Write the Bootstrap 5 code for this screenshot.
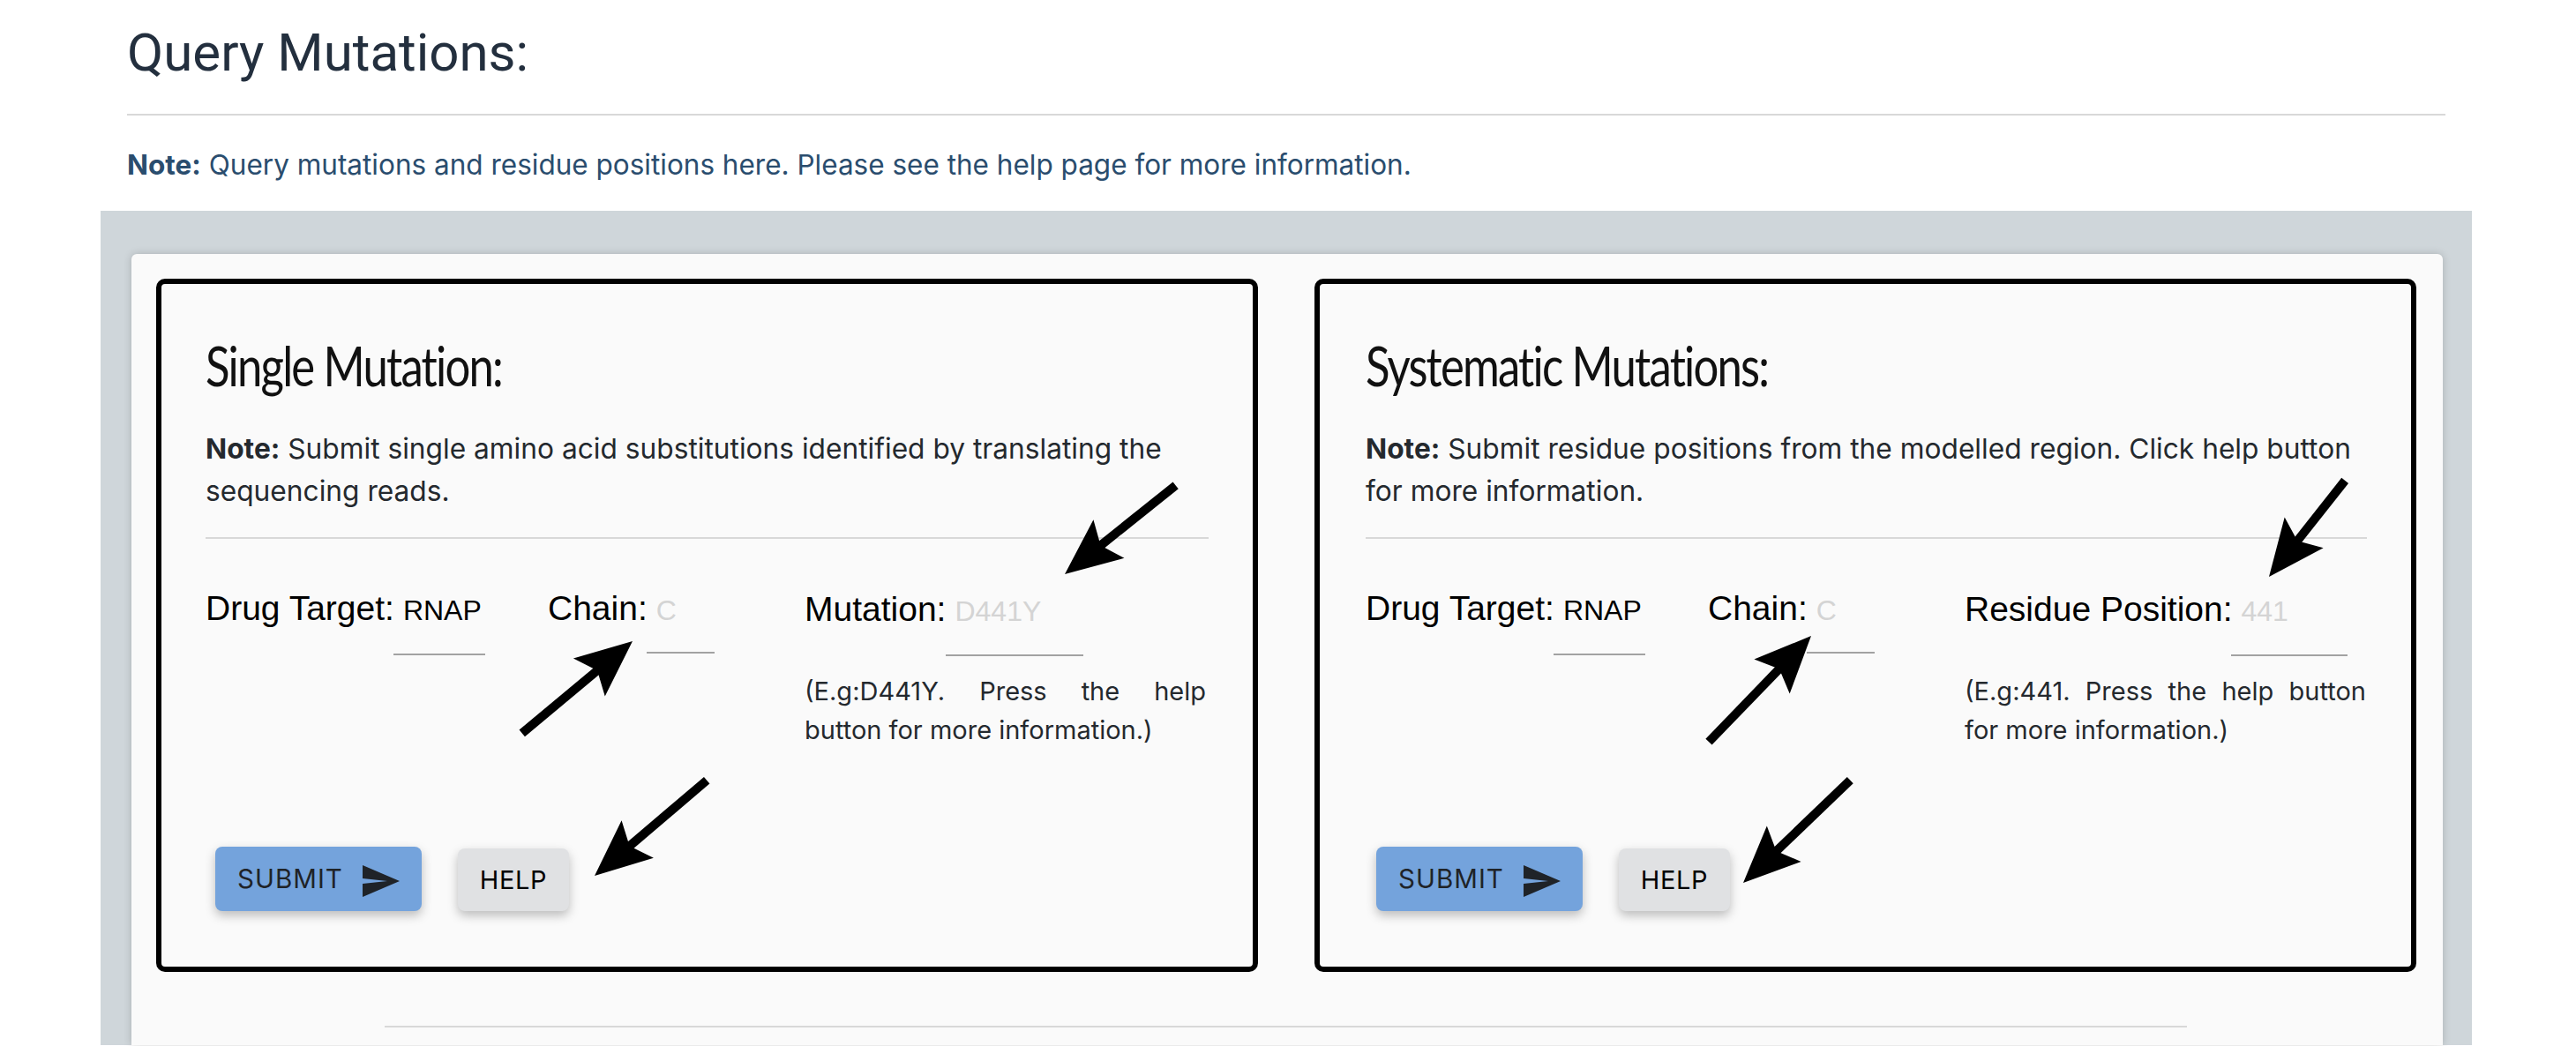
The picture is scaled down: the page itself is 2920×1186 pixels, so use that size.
<!DOCTYPE html>
<html lang="en">
<head>
    <meta charset="UTF-8">
    <meta name="viewport" content="width=device-width, initial-scale=1.0">
    <title>Query Mutations</title>
    <link href="https://cdn.jsdelivr.net/npm/bootstrap@5.3.0/dist/css/bootstrap.min.css" rel="stylesheet">
    <script src="https://cdn.jsdelivr.net/npm/bootstrap@5.3.0/dist/js/bootstrap.bundle.min.js"></script>
    <style>
        html, body { height: 100%; overflow: hidden; }
        body { font-family: Inter, sans-serif; background: #fff; }
        .page-wrap { height: 1186px; padding: 0 118px 0 114px; }
        .page-head { padding: 0 30px 0 30px; }
        .page-title { font-family: Roboto, sans-serif; font-size: 60px; font-weight: 400; color: #232f3e; line-height: 72px; padding-top: 24px; margin: 0; height: 131px; border-bottom: 2px solid #d8d8d8; }
        .page-note { font-size: 31.5px; color: #2a4d6e; line-height: 48px; margin: 0; padding-top: 32px; height: 108px; }
        .grey-panel { background: #cfd6da; padding: 49px 33px 0 35px; height: 946px; }
        .white-card { background: #fafafa; border: 0; border-radius: 6px 6px 0 0; box-shadow: 0 0 10px rgba(0,0,0,.18); padding: 28px 30px 0 28px; height: 100%; }
        .mut-box { position: relative; width: 1249px; height: 786px; border: 6px solid #000; border-radius: 10px; padding: 57px 50px 0 50px; }
        .mut-box-right { padding-left: 52px; }
        .mut-box-right .btn-row { left: 64px; }
        .mut-title { font-family: Lato, sans-serif; font-size: 62px; font-weight: 400; letter-spacing: -2.2px; color: #111; line-height: 70px; margin: 0 0 36px; transform: scaleX(.82); transform-origin: left center; white-space: nowrap; }
        .mut-note { font-size: 31.7px; line-height: 48px; color: #24292e; margin: 0; height: 126px; border-bottom: 2px solid #d8d8d8; }
        .field-row { padding-top: 51px; }
        .field-label { font-family: "Liberation Sans", sans-serif; font-size: 39px; color: #000; line-height: 56px; white-space: nowrap; }
        .field-val { font-family: "Liberation Sans", sans-serif; font-size: 32px; margin-left: 10px; }
        .field-ph { color: #d4d4d4; }
        .under { display: block; height: 2px; background: #a2a2a2; }
        .col-drug { width: 388px; }
        .col-chain { width: 291px; }
        .col-mut { width: 455px; padding-top: 1px; }
        .mut-help { font-size: 29px; line-height: 44px; color: #24292e; text-align: justify; margin: 18px 0 0; }
        .btn-row { position: absolute; left: 61px; top: 638px; align-items: flex-end; gap: 41px; }
        .sub-btn, .help-btn { font-family: Inter, Roboto, sans-serif; font-size: 29px; letter-spacing: .6px; border: 0; border-radius: 8px; color: #1f2328; box-shadow: 0 5px 12px rgba(0,0,0,.25); padding: 0; }
        .sub-btn { background: #74a3dc; width: 234px; height: 73px; font-size: 29.5px; letter-spacing: 1px; }
        .sub-btn svg { width: 42px; height: 36px; margin-left: 22px; }
        .help-btn { background: #e0e1e3; width: 126px; height: 71px; color: #000; }
        .arrow-layer { position: absolute; left: 0; top: 0; width: 100%; height: 100%; pointer-events: none; }
        .bottom-rule { border-top: 2px solid #d8d8d8; margin: 61px 260px 0 259px; }
    </style>
</head>
<body>
    <div class="page-wrap">
        <div class="page-head">
            <h1 class="page-title">Query Mutations:</h1>
            <p class="page-note"><b>Note:</b> Query mutations and residue positions here. Please see the help page for more information.</p>
        </div>
        <div class="grey-panel">
            <div class="card white-card">
                <div class="d-flex justify-content-between">

                    <div class="mut-box">
                        <h2 class="mut-title">Single Mutation:</h2>
                        <p class="mut-note"><b>Note:</b> Submit single amino acid substitutions identified by translating the sequencing reads.</p>
                        <div class="d-flex field-row">
                            <div class="col-drug">
                                <div class="field-label">Drug Target:<span class="field-val">RNAP</span></div>
                                <span class="under ms-auto" style="width:104px;margin-right:71px;margin-top:21px"></span>
                            </div>
                            <div class="col-chain">
                                <div class="field-label">Chain:<span class="field-val field-ph">C</span></div>
                                <span class="under" style="width:77px;margin-left:112px;margin-top:19px"></span>
                            </div>
                            <div class="col-mut">
                                <div class="field-label">Mutation:<span class="field-val field-ph">D441Y</span></div>
                                <span class="under" style="width:156px;margin-left:160px;margin-top:21px"></span>
                                <p class="mut-help">(E.g:D441Y. Press the help button for more information.)</p>
                            </div>
                        </div>
                        <div class="d-flex btn-row">
                            <button class="btn sub-btn">SUBMIT<svg viewBox="0 0 42 36"><path d="M0 0L42 18L0 36V21L28 18L0 15Z" fill="#1f2328"/></svg></button>
                            <button class="btn help-btn">HELP</button>
                        </div>
                        <svg class="arrow-layer">
                            <defs>
                                <g id="arrow-head"><polygon points="0,0 64,-28 52,0 64,28" fill="#000"/></g>
                            </defs>
                            <g transform="translate(1024 329) rotate(-38.7)"><use href="#arrow-head"/><line x1="50" y1="0" x2="161" y2="0" stroke="#000" stroke-width="10"/></g>
                            <g transform="translate(534 405) rotate(140.2)"><use href="#arrow-head"/><line x1="50" y1="0" x2="163" y2="0" stroke="#000" stroke-width="10"/></g>
                            <g transform="translate(491 671) rotate(-40.4)"><use href="#arrow-head"/><line x1="50" y1="0" x2="167" y2="0" stroke="#000" stroke-width="10"/></g>
                        </svg>
                    </div>

                    <div class="mut-box mut-box-right">
                        <h2 class="mut-title">Systematic Mutations:</h2>
                        <p class="mut-note"><b>Note:</b> Submit residue positions from the modelled region. Click help button for more information.</p>
                        <div class="d-flex field-row">
                            <div class="col-drug">
                                <div class="field-label">Drug Target:<span class="field-val">RNAP</span></div>
                                <span class="under ms-auto" style="width:104px;margin-right:71px;margin-top:21px"></span>
                            </div>
                            <div class="col-chain">
                                <div class="field-label">Chain:<span class="field-val field-ph">C</span></div>
                                <span class="under" style="width:77px;margin-left:112px;margin-top:19px"></span>
                            </div>
                            <div class="col-mut">
                                <div class="field-label">Residue Position:<span class="field-val field-ph">441</span></div>
                                <span class="under" style="width:132px;margin-left:302px;margin-top:21px"></span>
                                <p class="mut-help">(E.g:441. Press the help button for more information.)</p>
                            </div>
                        </div>
                        <div class="d-flex btn-row">
                            <button class="btn sub-btn">SUBMIT<svg viewBox="0 0 42 36"><path d="M0 0L42 18L0 36V21L28 18L0 15Z" fill="#1f2328"/></svg></button>
                            <button class="btn help-btn">HELP</button>
                        </div>
                        <svg class="arrow-layer">
                            <g transform="translate(1076 332) rotate(-51.7)"><use href="#arrow-head"/><line x1="50" y1="0" x2="139" y2="0" stroke="#000" stroke-width="10"/></g>
                            <g transform="translate(557 399) rotate(134)"><use href="#arrow-head"/><line x1="50" y1="0" x2="167" y2="0" stroke="#000" stroke-width="10"/></g>
                            <g transform="translate(480 679) rotate(-43.8)"><use href="#arrow-head"/><line x1="50" y1="0" x2="168" y2="0" stroke="#000" stroke-width="10"/></g>
                        </svg>
                    </div>

                </div>
                <div class="bottom-rule"></div>
            </div>
        </div>
    </div>
</body>
</html>
